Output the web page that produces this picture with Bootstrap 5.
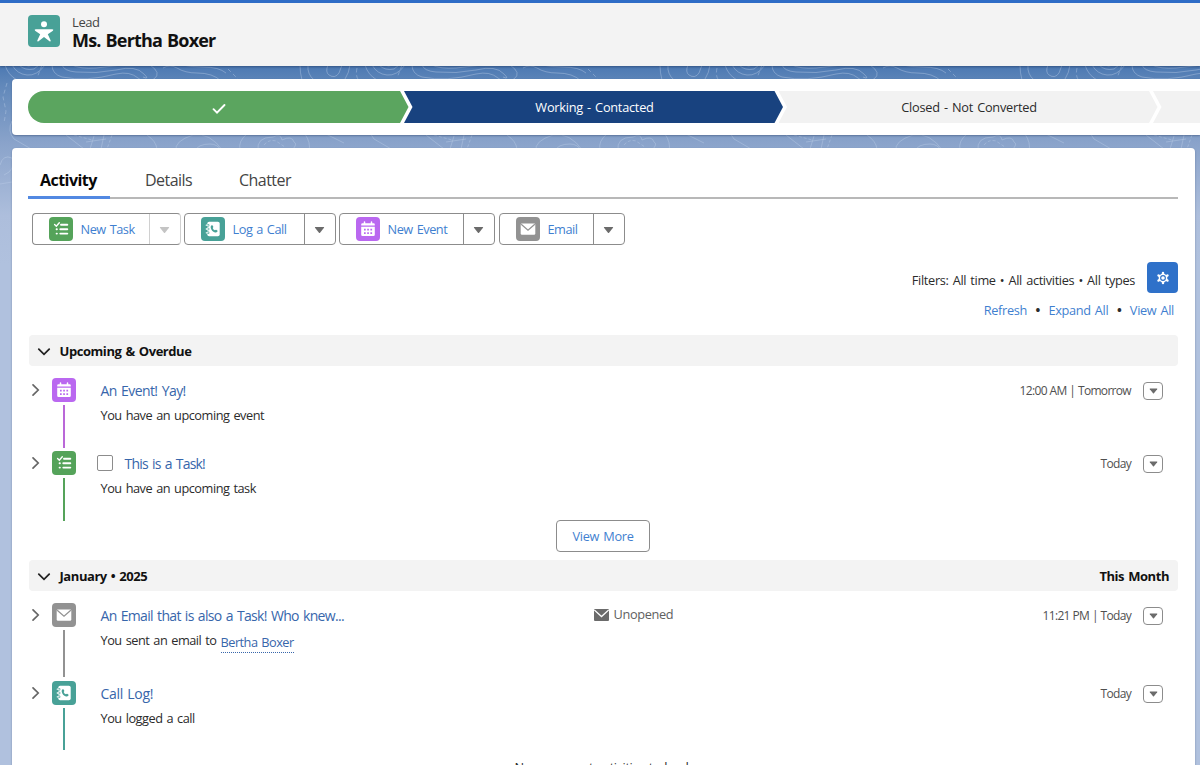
<!DOCTYPE html>
<html lang="en">
<head>
<meta charset="utf-8">
<meta name="viewport" content="width=device-width, initial-scale=1">
<title>Ms. Bertha Boxer | Lead</title>
<link href="https://cdn.jsdelivr.net/npm/bootstrap@5.3.0/dist/css/bootstrap.min.css" rel="stylesheet">
<style>
  html, body { height: 765px; overflow: hidden; }
  body { font-family: "Open Sans", "Noto Sans", sans-serif; font-size: 12.75px; line-height: 20px; letter-spacing: -.4px; word-spacing: 1.1px; color: #2b2b2b; background: #b0c1de; position: relative; }
  a { text-decoration: none; color: #3f7fd0; }
  svg { display: block; flex: none; }
  .backdrop { position: absolute; left: 0; top: 65px; z-index: -1; }
  .page-head { height: 66px; background: #f3f3f3; border-top: 3px solid #2e6cc6; padding: 12px 28px 0; gap: 12px; box-shadow: 0 1px 2px rgba(20,40,80,.45); }
  .head-kind { font-size: 13px; line-height: 16px; color: #444; margin-top: -1px; letter-spacing: -.4px; }
  .head-name { font-size: 18px; line-height: 20px; font-weight: 700; color: #111; letter-spacing: -.8px; word-spacing: 1px; margin: 0; }
  .panel { background: #fff; border-radius: 4px; box-shadow: 0 1px 2px rgba(30,50,90,.4); }
  .path-panel { margin: 13px 0 0 12px; height: 56px; padding: 12px 0 12px 16px; border-radius: 4px 0 0 4px; letter-spacing: -.25px; }
  .step { flex: none; width: 379px; height: 32px; margin-left: -4.5px; padding-left: 2px; background: #f2f2f2; clip-path: polygon(0 0, calc(100% - 8.5px) 0, 100% 50%, calc(100% - 8.5px) 100%, 0 100%, 8.5px 50%); }
  .step-done { width: 380.5px; margin-left: 0; background: #5ba55f; border-radius: 16px 0 0 16px; clip-path: polygon(0 0, calc(100% - 8.5px) 0, 100% 50%, calc(100% - 8.5px) 100%, 0 100%); }
  .step-now { background: #18427f; color: #fff; }
  .step-last { flex: 1 1 0; clip-path: polygon(0 0, 100% 0, 100% 100%, 0 100%, 8.5px 50%); }
  .main-panel { margin: 13px 0 0 12px; width: 1183px; height: 640px; padding: 10px 17px 0 16px; }
  .tabs { height: 41px; border-bottom: 2px solid #b8b8b8; font-size: 16px; letter-spacing: -.55px; }
  .tabs a { color: #444; line-height: 45px; padding: 0 12px; height: 41px; margin-right: 23px; }
  .tabs a.on { width: 82px; color: #080808; font-weight: 700; border-bottom: 3px solid #5289e2; letter-spacing: -.55px; }
  .actions { padding: 14px 0 0 4px; }
  .act { height: 32px; border: 1px solid #8c8c8c; border-radius: 4px; background: #fff; }
  .act a { padding-left: 15.5px; gap: 8px; letter-spacing: -.47px; }
  .act .arrow { width: 31px; border-left: 1px solid #8c8c8c; height: 30px; padding: 1px 1px 0 0; }
  .arrow.off { color: #c4c4c4; border-color: #d0d0d0 !important; }
  .act:has(.off) { border-right-color: #d0d0d0; }
  .arrow { color: #6b6b6b; }
  .filters { margin: 8px 12px 0 0; letter-spacing: -.34px; word-spacing: 1.2px; }
  .links { margin: 7px 4px 0 0; gap: 8.5px; letter-spacing: -.33px; }
  .gear { width: 31px; height: 31px; border-radius: 4px; background: #2f71c9; }
  .sect { height: 31px; background: #f3f3f3; border-radius: 4px; padding: 0 9px 0 8px; font-size: 13px; font-weight: 700; color: #111; margin-left: 1px; letter-spacing: -.44px; }
  .sect svg { margin: 2px 8.5px 0 0; }
  .entry { padding: 12px 15px 0 2.5px; }
  .rail { width: 24px; margin-left: 11px; }
  .rail i { display: block; width: 2px; margin: 3px auto 0; }
  .entry .title { font-size: 14px; color: #3766ab; letter-spacing: -.68px; word-spacing: 1.2px; position: relative; top: .5px; }
  .entry .title-event { letter-spacing: -.58px; }
  .entry .title-task { letter-spacing: -.78px; }
  .entry .title-call { letter-spacing: -.33px; top: 1px; }
  .copy { margin-left: 25px; padding-top: 2px; }
  .copy p { margin: 5px 0 0; letter-spacing: -.47px; }
  .when { color: #505050; font-size: 12px; letter-spacing: -.68px; word-spacing: .3px; padding-top: 3px; gap: 12px; height: 22px; }
  .drop { width: 20px; height: 18px; border: 1px solid #8c8c8c; border-radius: 4px; color: #6b6b6b; }
  .box { width: 16px; height: 16px; border: 1px solid #8c8c8c; border-radius: 2px; margin: 0 12px 0 -4px; }
  .more { height: 32px; width: 94px; border: 1px solid #8c8c8c; border-radius: 4px; letter-spacing: -.3px; }
  .chev { width: 10px; margin-top: 5px; }
  .who { color: #3766ab; margin-left: 4px; line-height: 20px; height: 20.5px; letter-spacing: -.53px; border-bottom: 1px dotted #3766ab; position: relative; top: 2px; }
  .unopened { color: #606060; gap: 5px; padding-top: 1px; letter-spacing: -.35px; }
  .unopened svg { margin-top: 5px; }
</style>
</head>
<body>
<svg width="0" height="0" class="position-absolute">
  <symbol id="task" viewBox="0 0 24 24"><rect width="24" height="24" rx="4" fill="#55a35a"/><g fill="none" stroke="#fff" stroke-width="1.9" stroke-linecap="round"><path d="M5.600 7.600 7.300 9.200 10.300 5.800" stroke-width="1.400"/><path d="M12 7.800h6.300M11.300 12.300h7M11.300 16.600h7"/><path d="M7.600 12.300h.3M7.600 16.600h.3"/></g></symbol>
  <symbol id="call" viewBox="0 0 24 24"><rect width="24" height="24" rx="4" fill="#48a197"/><rect x="6.300" y="4.800" width="12.400" height="14.400" rx="1.800" fill="#fff"/><path d="M5.600 8.200h1.600M5.600 12h1.600M5.600 15.800h1.600" stroke="#48a197" stroke-width="2.400" stroke-linecap="round"/><path d="M5.300 8.200h1.800M5.300 12h1.800M5.300 15.800h1.800" stroke="#fff" stroke-width="1.300" stroke-linecap="round"/><path d="M10.200 8.600q.8-.9 1.500 0l.6 1.100q.2.600-.6 1.300.5 1.700 2.200 2.300.8-.8 1.300-.5l1.100.7q.7.500 0 1.300-.9 1-2.300.6-3.600-1.200-4.300-4.700-.2-1.300.5-2.100z" fill="#48a197"/></symbol>
  <symbol id="event" viewBox="0 0 24 24"><rect width="24" height="24" rx="4" fill="#ba68f0"/><path d="M5.200 8.600V7.500A1.300 1.300 0 0 1 6.500 6.200h11A1.300 1.300 0 0 1 18.800 7.500v1.100zM5.200 9.800h13.600v8a1.300 1.300 0 0 1-1.300 1.300h-11a1.300 1.300 0 0 1-1.300-1.300z" fill="#fff"/><path d="M8.500 5v2M15.500 5v2" stroke="#fff" stroke-width="1.500" stroke-linecap="round"/><path d="M8 12.700h1.700M11.200 12.700h1.700M14.400 12.700h1.700M8 16.100h1.700M11.200 16.100h1.700M14.400 16.100h1.700" stroke="#ba68f0" stroke-width="1.700"/></symbol>
  <symbol id="email" viewBox="0 0 24 24"><rect width="24" height="24" rx="4" fill="#929292"/><rect x="4.700" y="6.500" width="14.600" height="11.200" rx="1.300" fill="#fff"/><path d="M5.200 7.200 12 13.300 18.800 7.200" fill="none" stroke="#929292" stroke-width="1.200"/></symbol>
  <symbol id="down" viewBox="0 0 12 8"><path d="M1.500.8h9q1 0 .4.800L6.600 7q-.6.600-1.200 0L1.100 1.600Q.6.800 1.500.8z" fill="currentColor"/></symbol>
  <symbol id="right" viewBox="0 0 10 14"><path d="M2 1.800 7.200 7 2 12.200" fill="none" stroke="#666" stroke-width="1.700" stroke-linecap="round"/></symbol>
  <symbol id="open" viewBox="0 0 14 10"><path d="M1.800 2.200 7 7.300l5.200-5.100" fill="none" stroke="#222" stroke-width="1.800" stroke-linecap="round"/></symbol>
</svg>

<svg class="backdrop" width="1200" height="700">
  <defs>
    <linearGradient id="sky" x1="0" y1="0" x2="0" y2="1"><stop offset="0" stop-color="#4b78b2"/><stop offset=".1" stop-color="#6188ba"/><stop offset=".4" stop-color="#8ba4cb"/><stop offset=".75" stop-color="#adbedc"/><stop offset="1" stop-color="#b0c1de"/></linearGradient>
    <pattern id="contours" width="360" height="140" patternUnits="userSpaceOnUse">
      <g fill="none" stroke="#bdd0e8" stroke-opacity=".4" stroke-width="1">
        <path d="M5 0q3 10 12 15M12 0q5 9 15 10t18-10M19 0q6 6 15 4l5-4M24 0q5 2 9 0M52 0q0 9 10 12 24 5 54-3 14-3 22 4t16 1-4-14M62 0q2 6 14 7 20 2 40-2 20-5 28 4 6 6-1 3M72 0q8 4 24 3l26-3M163 3q7-4 14 0 8 5 20 5 16 0 24 8M182 0q10 2 21 2 16 0 23 6M328 0q-3 7 1 10 6 4 10-2l3-8M308 0q-1 9 6 15M300 0q0 8 2 15M350 0q-1 8-5 14"/>
        <path d="M357 3q-2 10 3 13M228 4l12 12M42 0l-5 13M7 18l-4 14 3 14-2 12" stroke-dasharray="4 3"/>
        <path d="M12 56q-5 10 2 18l12 7q8 4 12 8M0 100q3-11 12-7 4 12-8 17M0 119l12-2M66 70l18 14M94 71l-4 13M104 70l-3 14M86 77l20-3M147 70q9 6 10 14M176 86q-2-10 17-16 17-3 30 16M195 86q3-7 15-7 8 0 11 7M247 69q-9 7-7 16M258 86q-2-14 15-14 8-4 9 3 10-5 12 2 4 2-2 8M305 69q6 9 4 17M326 69l18 9"/>
        <path d="M74 70l18 5M264 80q5-6 12-4l9 6M112 70l-5 14" stroke-dasharray="3 2"/>
      </g>
    </pattern>
  </defs>
  <rect width="1200" height="700" fill="#b0c1de"/>
  <rect width="1200" height="200" fill="url(#sky)"/>
  <rect width="1200" height="125" fill="url(#contours)"/>
</svg>

<header class="page-head d-flex align-items-start">
  <svg width="32" height="32" viewBox="0 0 32 32"><rect width="32" height="32" rx="4" fill="#48a197"/><circle cx="16" cy="9.300" r="3" fill="#fff"/><path d="M7.700 14.300h16.600q1.800.4.600 1.500L19.800 19.300l2.900 6.300q0 1.300-1.200.6L16 21.900l-5.500 4.300q-1.200.7-1.200-.6l2.900-6.300L7.100 15.800q-1.200-1.100.6-1.500z" fill="#fff"/></svg>
  <div><div class="head-kind">Lead</div><h1 class="head-name">Ms. Bertha Boxer</h1></div>
</header>

<section class="panel path-panel d-flex overflow-hidden">
  <div class="step step-done d-flex align-items-center justify-content-center"><svg width="16" height="14" viewBox="0 0 16 14" class="mt-1"><path d="M2.500 7.200 6 10.700 13.500 3" fill="none" stroke="#fff" stroke-width="1.900" stroke-linecap="round"/></svg></div>
  <div class="step step-now d-flex align-items-center justify-content-center">Working - Contacted</div>
  <div class="step d-flex align-items-center justify-content-center">Closed - Not Converted</div>
  <div class="step step-last"></div>
</section>

<main class="panel main-panel">
  <nav class="tabs d-flex"><a class="on" href="#">Activity</a><a href="#">Details</a><a href="#">Chatter</a></nav>

  <div class="actions d-flex">
    <div class="act d-flex" style="width:149px;margin-right:3px"><a href="#" class="d-flex flex-fill align-items-center"><svg width="24" height="24"><use href="#task"/></svg>New Task</a><span class="arrow off d-flex align-items-center justify-content-center"><svg width="11" height="8"><use href="#down"/></svg></span></div>
    <div class="act d-flex" style="width:152px;margin-right:3px"><a href="#" class="d-flex flex-fill align-items-center"><svg width="24" height="24"><use href="#call"/></svg>Log a Call</a><span class="arrow d-flex align-items-center justify-content-center"><svg width="11" height="8"><use href="#down"/></svg></span></div>
    <div class="act d-flex" style="width:156px;margin-right:4px"><a href="#" class="d-flex flex-fill align-items-center"><svg width="24" height="24"><use href="#event"/></svg>New Event</a><span class="arrow d-flex align-items-center justify-content-center"><svg width="11" height="8"><use href="#down"/></svg></span></div>
    <div class="act d-flex" style="width:126px"><a href="#" class="d-flex flex-fill align-items-center"><svg width="24" height="24"><use href="#email"/></svg>Email</a><span class="arrow d-flex align-items-center justify-content-center"><svg width="11" height="8"><use href="#down"/></svg></span></div>
  </div>

  <div class="d-flex justify-content-end" style="margin-top:17px"><span class="filters">Filters: All time • All activities • All types</span>
    <span class="gear d-flex align-items-center justify-content-center"><svg width="14" height="14" viewBox="0 0 16 16"><path d="M8 3.300v-1M8 13.700v-1M3.900 5.700l-1-.6M13.100 10.900l-1-.6M3.900 10.300l-1 .6M13.100 5.100l-1 .6" stroke="#fff" stroke-width="2.800" stroke-linecap="round"/><circle cx="8" cy="8" r="5" fill="#fff"/><circle cx="8" cy="8" r="2.700" fill="none" stroke="#2f71c9" stroke-width="1.300"/></svg></span></div>
  <div class="links d-flex justify-content-end"><a href="#">Refresh</a><b>•</b><a href="#">Expand All</a><b>•</b><a href="#">View All</a></div>

  <div class="sect d-flex align-items-center" style="margin-top:15px"><svg width="14" height="10"><use href="#open"/></svg>Upcoming &amp; Overdue</div>
  <div class="entry d-flex" style="height:73px">
    <svg class="chev" width="10" height="14"><use href="#right"/></svg>
    <div class="rail"><svg width="24" height="24"><use href="#event"/></svg><i style="height:43px;background:#ba68d8"></i></div>
    <div class="copy flex-fill"><a class="title title-event" href="#">An Event! Yay!</a><p>You have an upcoming event</p></div>
    <div class="when d-flex align-items-center">12:00 AM | Tomorrow<span class="drop d-flex align-items-center justify-content-center"><svg width="9" height="6"><use href="#down"/></svg></span></div>
  </div>
  <div class="entry d-flex" style="height:81px">
    <svg class="chev" width="10" height="14"><use href="#right"/></svg>
    <div class="rail"><svg width="24" height="24"><use href="#task"/></svg><i style="height:43px;background:#55a35a"></i></div>
    <div class="copy flex-fill"><div class="d-flex align-items-center"><span class="box"></span><a class="title title-task" href="#">This is a Task!</a></div><p>You have an upcoming task</p></div>
    <div class="when d-flex align-items-center">Today<span class="drop d-flex align-items-center justify-content-center"><svg width="9" height="6"><use href="#down"/></svg></span></div>
  </div>
  <a href="#" class="more d-flex align-items-center justify-content-center mx-auto">View More</a>

  <div class="sect d-flex align-items-center" style="margin-top:8px"><svg width="14" height="10"><use href="#open"/></svg>January • 2025<span class="ms-auto">This Month</span></div>
  <div class="entry d-flex" style="height:78px">
    <svg class="chev" width="10" height="14"><use href="#right"/></svg>
    <div class="rail"><svg width="24" height="24"><use href="#email"/></svg><i style="height:47px;background:#929292"></i></div>
    <div class="copy" style="width:493px"><a class="title" href="#">An Email that is also a Task! Who knew...</a><p class="d-flex">You sent an email to<a class="who" href="#">Bertha Boxer</a></p></div>
    <div class="unopened d-flex flex-fill"><svg width="15" height="12" viewBox="0 0 15 12"><rect width="15" height="12" rx="1" fill="#6b6b6b"/><path d="M.3 1 7.500 7.600 14.700 1" fill="none" stroke="#fff" stroke-width="1.300"/></svg><span>Unopened</span></div>
    <div class="when d-flex align-items-center">11:21 PM | Today<span class="drop d-flex align-items-center justify-content-center"><svg width="9" height="6"><use href="#down"/></svg></span></div>
  </div>
  <div class="entry d-flex" style="height:88px">
    <svg class="chev" width="10" height="14"><use href="#right"/></svg>
    <div class="rail"><svg width="24" height="24"><use href="#call"/></svg><i style="height:42px;background:#48a197"></i></div>
    <div class="copy flex-fill"><a class="title title-call" href="#">Call Log!</a><p>You logged a call</p></div>
    <div class="when d-flex align-items-center">Today<span class="drop d-flex align-items-center justify-content-center"><svg width="9" height="6"><use href="#down"/></svg></span></div>
  </div>
  <div class="text-center">No more past activities to load.</div>
</main>
<script src="https://cdn.jsdelivr.net/npm/bootstrap@5.3.0/dist/js/bootstrap.bundle.min.js"></script>
</body>
</html>
